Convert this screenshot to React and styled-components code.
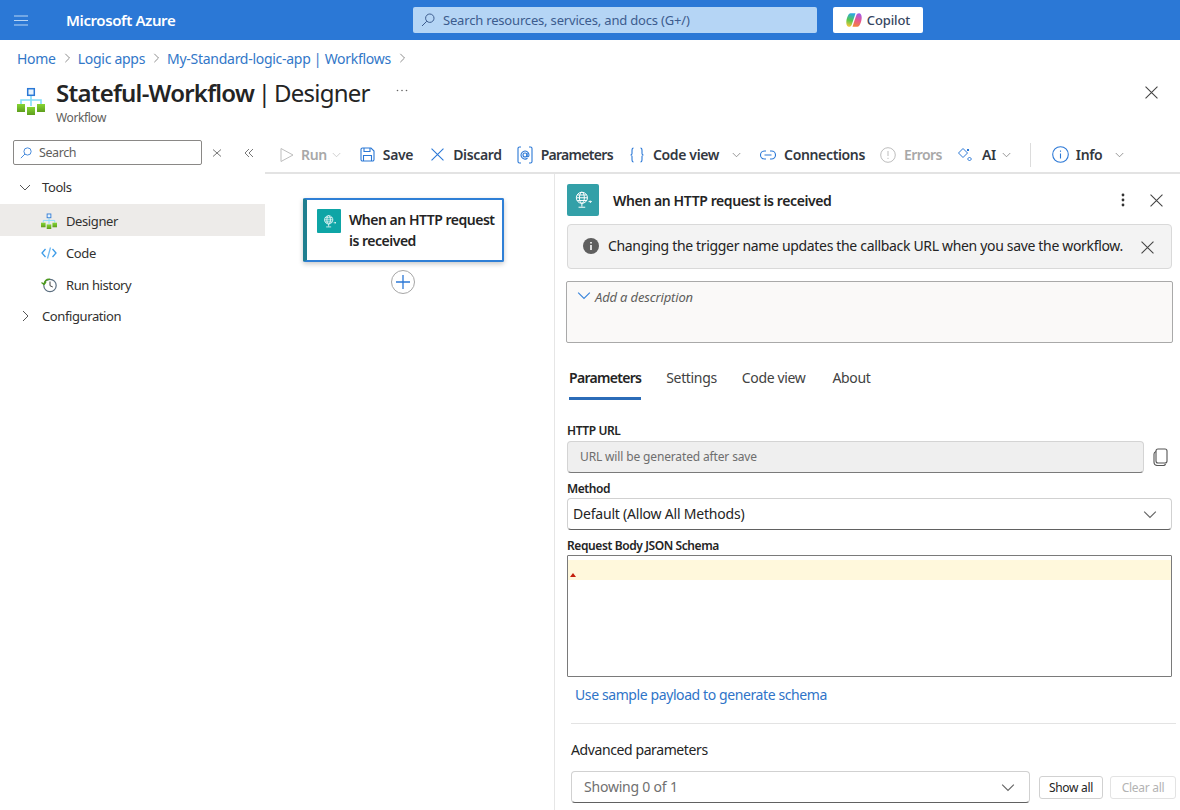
import React from "react";
import styled, { createGlobalStyle } from "styled-components";

const Global = createGlobalStyle`
  html, body { margin: 0; padding: 0; background: #fff; }
  body { font-family: "Noto Sans", "Open Sans", sans-serif; color: #242424; letter-spacing: -0.025em; }
  * { box-sizing: border-box; }
`;

const Page = styled.div`
  width: 1180px; height: 810px; overflow: hidden; display: flex; flex-direction: column; background: #fff;
`;
const TopBar = styled.header`
  height: 40px; flex: none; background: #2b78d6; display: flex; align-items: center; padding-left: 14px;
`;
const Brand = styled.div`
  margin-left: 38px; width: 347px; color: #fff; font-size: 15px; font-weight: 600;
`;
const GlobalSearch = styled.div`
  width: 404px; height: 26px; background: #b5d5f5; border-radius: 2px; display: flex; align-items: center;
  gap: 8px; padding-left: 8px; color: #3c5c8e; font-size: 13px; letter-spacing: -0.014em;
`;
const CopilotBtn = styled.button`
  margin-left: 16px; width: 90px; height: 26px; background: #fff; border: 0; border-radius: 2px; display: flex;
  align-items: center; justify-content: center; gap: 5px; color: #36465f; font: 500 13px "Noto Sans", sans-serif; letter-spacing: -0.01em;
`;
const Crumbs = styled.nav`
  height: 36px; flex: none; display: flex; align-items: center; padding-left: 17px; gap: 6px;
  font-size: 14px; color: #3277c8; letter-spacing: -0.02em;
`;
const TitleRow = styled.div`
  height: 59px; flex: none; display: flex; padding-left: 17px; align-items: flex-start; padding-top: 1px;
`;
const TitleLogo = styled.div`
  padding-top: 10px; display: flex;
`;
const TitleText = styled.div`
  margin-left: 11px; display: flex; flex-direction: column; width: 340px;
`;
const Title = styled.h1`
  margin: 0; font-size: 24px; line-height: 32px; font-weight: 400; color: #242424; white-space: nowrap;
  letter-spacing: -0.032em; word-spacing: -1.7px;
  b { font-weight: 600; }
`;
const Sub = styled.div`
  font-size: 12px; line-height: 16px; color: #605e5c; margin-top: 1px;
`;
const TitleActions = styled.div`
  width: 762px; display: flex; justify-content: space-between; align-items: flex-start;
`;
const TitleDots = styled.div`
  display: flex; margin-top: 12px;
`;
const TitleClose = styled.div`
  display: flex; margin-top: 9px;
`;
const Body = styled.div`
  flex: 1; display: flex; min-height: 0;
`;
const Sidebar = styled.aside`
  width: 265px; flex: none; display: flex; flex-direction: column; padding-top: 5px;
`;
const SideTop = styled.div`
  display: flex; align-items: center; padding-left: 13px;
`;
const SideSearch = styled.div`
  width: 189px; height: 25px; border: 1px solid #8a8886; border-radius: 2px; display: flex; align-items: center;
  gap: 7px; padding-left: 6px; font-size: 12.5px; color: #605e5c;
`;
const SideBtn = styled.div`
  display: flex; margin-left: ${p => p.$ml}px;
`;
const GroupRow = styled.div`
  height: ${p => p.$h || 32}px; display: flex; align-items: center; gap: 11px; padding-left: 19px; font-size: 13px; color: #323130;
  margin-top: ${p => p.$mt || 0}px; padding-bottom: ${p => p.$pb || 0}px;
`;
const NavRow = styled.div`
  height: 32px; display: flex; align-items: center; gap: 9px; padding: 1px 0 0 41px; font-size: 13px; color: #323130;
  background: ${p => (p.$active ? "#edebe9" : "transparent")};
`;
const Main = styled.div`
  flex: 1; display: flex; flex-direction: column; min-width: 0;
`;
const Toolbar = styled.div`
  height: 39px; flex: none; border-bottom: 2px solid #e3e3e3; display: flex; align-items: center; padding-left: 15px;
  padding-top: 2px;
`;
const ToolItem = styled.div`
  display: flex; align-items: center; gap: ${p => p.$gap ?? 8}px; margin-left: ${p => p.$ml || 0}px; font-size: 14px; font-weight: 600;
  color: ${p => (p.$off ? "#a8a8a8" : "#33383f")}; white-space: nowrap; letter-spacing: ${p => p.$ls || "-0.025em"};
`;
const ChevWrap = styled.span`
  display: flex; margin-left: ${p => p.$w ?? -2}px;
`;
const ToolDivider = styled.div`
  width: 1px; height: 24px; background: #dcdcdc; margin-left: 19px;
`;
const Work = styled.div`
  flex: 1; display: flex; min-height: 0;
`;
const Canvas = styled.div`
  width: 290px; flex: none; border-right: 1px solid #e6e6e6; display: flex; flex-direction: column; align-items: flex-start;
  padding: 24px 0 0 38px;
`;
const Node = styled.div`
  width: 201px; height: 64px; background: #fff; border: 2px solid #2f7fd6; border-left: 4px solid #1f7f8f; border-radius: 2px;
  box-shadow: 0 2px 5px rgba(0,0,0,.22); display: flex; padding: 9px 0 0 10px; gap: 8px; font-size: 14px; font-weight: 600;
  line-height: 21px; color: #242424; letter-spacing: -0.035em;
`;
const NodeIcon = styled.div`
  width: 24px; height: 24px; background: #0ea5a6; border-radius: 1px; display: flex; align-items: center; justify-content: center; flex: none;
`;
const NodeLabel = styled.div`
  width: 150px; white-space: nowrap;
`;
const AddBtn = styled.div`
  width: 24px; height: 24px; border-radius: 50%; border: 1px solid #a6a6a6; margin: 8px 0 0 88px; background: #fff;
  display: flex; align-items: center; justify-content: center;
`;
const Panel = styled.section`
  flex: 1; min-width: 0; padding: 10px 8px 0 12px; display: flex; flex-direction: column; overflow: hidden;
`;
const PanelHead = styled.div`
  height: 32px; flex: none; display: flex; align-items: center; font-size: 14px; font-weight: 600; color: #242424;
`;
const HeadIcon = styled.div`
  width: 32px; height: 32px; background: #33a0a8; border-radius: 2px; display: flex; align-items: center; justify-content: center; margin-right: 14px; flex: none;
`;
const HeadTitle = styled.div`
  flex: 1;
`;
const HeadBtns = styled.div`
  display: flex; align-items: center; gap: 25px; margin-right: 9px;
`;
const Notice = styled.div`
  height: 45px; flex: none; margin-top: 8px; background: #f3f3f3; border: 1px solid #d9d9d9; border-radius: 4px; display: flex;
  align-items: center; padding: 0 0 2px 15px; gap: 9px; font-size: 14px; color: #242424; width: 605px; letter-spacing: -0.0235em;
`;
const NoticeText = styled.div`
  flex: 1; white-space: nowrap;
`;
const NoticeClose = styled.div`
  display: flex; margin: 4px 17px 0 0;
`;
const Description = styled.div`
  height: 62px; flex: none; width: 607px; margin: 12px 0 0 -1px; background: #faf9f8; border: 1px solid #a9a9a9; border-radius: 2px;
  display: flex; padding: 6px 0 0 10px; gap: 4px; font-size: 13px; font-style: italic; color: #605e5c; letter-spacing: -0.012em;
  svg { margin-top: 0; }
  span { line-height: 18px; }
`;
const Tabs = styled.div`
  flex: none; display: flex; margin-top: 24px; padding-left: 2px; gap: 25px;
`;
const Tab = styled.div`
  height: 33px; font-size: 14px; line-height: 22px; color: ${p => (p.$active ? "#242424" : "#424242")};
  font-weight: ${p => (p.$active ? 600 : 400)}; border-bottom: 3px solid ${p => (p.$active ? "#2b6cb8" : "transparent")};
  white-space: nowrap; letter-spacing: ${p => (p.$active ? "-0.05em" : "-0.025em")}; margin-left: ${p => p.$ml || 0}px;
`;
const Label = styled.div`
  font-size: 12px; font-weight: 600; line-height: 16px; color: #242424; margin-top: ${p => p.$mt}px; padding-bottom: ${p => p.$pb || 0}px; flex: none;
`;
const InputRow = styled.div`
  flex: none; display: flex; align-items: center; gap: 9px; margin-top: 2px;
`;
const ReadOnly = styled.div`
  width: 577px; height: 32px; background: #efefef; border: 1px solid #d4d4d4; border-bottom-color: #7a7a7a; border-radius: 4px;
  display: flex; align-items: center; padding: 0 0 1px 12px; font-size: 12px; color: #6e6e6e; letter-spacing: -0.012em;
`;
const Select = styled.div`
  width: ${p => p.$w}px; height: 32px; flex: none; background: #fff; border: 1px solid #d1d1d1; border-bottom-color: #616161; border-radius: 4px;
  display: flex; align-items: center; justify-content: space-between; padding: 0 14px 1px ${p => p.$pl}px; font-size: 14px;
  color: ${p => p.$muted ? "#707070" : "#242424"}; letter-spacing: -0.015em;
`;
const Editor = styled.div`
  width: 605px; height: 122px; flex: none; border: 1px solid #7a7a7a; border-radius: 1px; padding-top: 4px; background: #fff;
`;
const EditorLine = styled.div`
  height: 20px; background: #fff8dc; position: relative;
  &::after { content: ""; position: absolute; left: 2px; bottom: 3px; border-left: 3px solid transparent; border-right: 3px solid transparent; border-bottom: 4px solid #c41e0c; }
`;
const LinkText = styled.a`
  flex: none; margin: 8px 0 0 8px; font-size: 14px; line-height: 19px; color: #2f74c8;
`;
const Divider = styled.div`
  flex: none; height: 1px; background: #e3e3e3; margin: 19px -4px 0 4px;
`;
const AdvLabel = styled.div`
  flex: none; margin: 16px 0 0 4px; font-size: 14px; line-height: 20px; color: #242424;
`;
const AdvRow = styled.div`
  flex: none; display: flex; align-items: center; margin: 11px -4px 0 4px;
`;
const SmallBtn = styled.button`
  width: ${p => p.$w}px; height: 23px; margin-left: ${p => p.$ml}px; background: #fff; border: 1px solid ${p => p.disabled ? "#e3e3e3" : "#d1d1d1"}; border-radius: 3px;
  font: 12px "Noto Sans", sans-serif; letter-spacing: -0.025em; color: ${p => (p.disabled ? "#b3b3b3" : "#242424")}; padding: 0;
`;

const Chev = ({ s = 12, c = "#605e5c", d = "down", w = 1 }) => {
  const paths = { down: "M1 4l5 5 5-5", right: "M4 1l5 5-5 5" };
  return <svg width={s} height={s} viewBox="0 0 12 12" fill="none" stroke={c} strokeWidth={w}><path d={paths[d]} /></svg>;
};
const Cross = ({ s = 12, c = "#444", w = 1 }) => (
  <svg width={s} height={s} viewBox="0 0 12 12" stroke={c} strokeWidth={w} fill="none"><path d="M.5.5l11 11M11.5.5l-11 11" /></svg>
);
const Mag = ({ c = "#3c5c8e", s = 14 }) => (
  <svg width={s} height={s} viewBox="0 0 14 14" fill="none" stroke={c} strokeWidth="1"><circle cx="8.8" cy="5.2" r="4.2" /><path d="M5.8 8.2L1 13" /></svg>
);
const Flow = ({ s = 28, id = "grn" }) => (
  <svg width={s} height={s} viewBox="0 0 28 28" fill="none">
    <defs><linearGradient id={id} x1="0" y1="0" x2="0" y2="1"><stop offset="0" stopColor="#86d633" /><stop offset="1" stopColor="#5e9e1e" /></linearGradient></defs>
    <path d="M14 9v10M4 17v-4h20v4" stroke="#83dcf9" strokeWidth="1.6" />
    <rect x="10.7" y="1.7" width="6.6" height="6.6" fill="#e8f3fc" stroke="#2a78d6" strokeWidth="1.5" />
    <rect y="17" width="8" height="8" fill={`url(#${id})`} /><rect x="10" y="20" width="8" height="8" fill={`url(#${id})`} /><rect x="20" y="17" width="8" height="8" fill={`url(#${id})`} />
  </svg>
);
const Globe = ({ s = 18 }) => (
  <svg width={s} height={s} viewBox="0 0 18 18" fill="none" stroke="#fff" strokeWidth=".9">
    <circle cx="8" cy="7" r="5" /><ellipse cx="8" cy="7" rx="2.2" ry="5" /><path d="M3 7h10M3.8 4.5h8.4M3.8 9.5h8.4M8 12v3M5 15.5h6" />
    <path d="M14 10.5h2.5M15.5 9.5l1 1-1 1" />
  </svg>
);
const Copilot = () => (
  <svg width="16" height="16" viewBox="0 0 16 16">
    <defs>
      <linearGradient id="cp1" x1="0.6" y1="0" x2="0.4" y2="1"><stop offset="0" stopColor="#2aa7e8" /><stop offset=".55" stopColor="#58c84b" /><stop offset="1" stopColor="#f4c63a" /></linearGradient>
      <linearGradient id="cp2" x1="0.6" y1="0" x2="0.4" y2="1"><stop offset="0" stopColor="#a35be8" /><stop offset=".5" stopColor="#e8578f" /><stop offset="1" stopColor="#f2843c" /></linearGradient>
    </defs>
    <path d="M4.500 1.200h5L8 6 5.800 12.500C5.300 14 4.300 14.800 3 14.800 1.300 14.800 .3 13 .3 10.500 .3 7 2 3 3 2 3.400 1.500 4 1.200 4.500 1.200z" fill="url(#cp1)" />
    <path d="M11.500 14.800h-5L8 10 10.200 3.500C10.700 2 11.700 1.200 13 1.200 14.700 1.200 15.700 3 15.700 5.500 15.700 9 14 13 13 14 12.600 14.500 12 14.800 11.500 14.800z" fill="url(#cp2)" />
  </svg>
);

export default function App() {
  return (
    <Page>
      <Global />
      <TopBar>
        <svg width="14" height="11" viewBox="0 0 14 11" stroke="#b9d5f3" strokeWidth="1.2"><path d="M0 1h14M0 5.500h14M0 10h14" /></svg>
        <Brand>Microsoft Azure</Brand>
        <GlobalSearch><Mag />Search resources, services, and docs (G+/)</GlobalSearch>
        <CopilotBtn><Copilot />Copilot</CopilotBtn>
      </TopBar>
      <Crumbs>
        <span>Home</span><Chev s={10} c="#777" d="right" />
        <span>Logic apps</span><Chev s={10} c="#777" d="right" />
        <span>My-Standard-logic-app | Workflows</span><Chev s={10} c="#777" d="right" />
      </Crumbs>
      <TitleRow>
        <TitleLogo><Flow /></TitleLogo>
        <TitleText>
          <Title><b>Stateful-Workflow</b> | Designer</Title>
          <Sub>Workflow</Sub>
        </TitleText>
        <TitleActions>
          <TitleDots>
            <svg width="12" height="3" viewBox="0 0 12 3" fill="#666"><circle cx="1.500" cy="1.500" r=".8" /><circle cx="6" cy="1.500" r=".8" /><circle cx="10.500" cy="1.500" r=".8" /></svg>
          </TitleDots>
          <TitleClose><Cross s={13} /></TitleClose>
        </TitleActions>
      </TitleRow>
      <Body>
        <Sidebar>
          <SideTop>
            <SideSearch><Mag c="#2b78d6" s={12} />Search</SideSearch>
            <SideBtn $ml={10}><svg width="10" height="10" viewBox="0 0 10 10" stroke="#777" fill="none"><path d="M1 1.500l8 7M9 1.500l-8 7" /></svg></SideBtn>
            <SideBtn $ml={22}><svg width="10" height="10" viewBox="0 0 10 10" stroke="#777" fill="none"><path d="M5 1L1 5l4 4M9 1L5 5l4 4" /></svg></SideBtn>
          </SideTop>
          <GroupRow $mt={6} $h={33} $pb={1}><Chev c="#555" />Tools</GroupRow>
          <NavRow $active><Flow s={16} id="grn2" />Designer</NavRow>
          <NavRow>
            <svg width="16" height="16" viewBox="0 0 16 16" fill="none" strokeWidth="1.300"><path d="M4.500 4L1 8l3.500 4" stroke="#3b9be8" /><path d="M11.500 4L15 8l-3.500 4" stroke="#3b9be8" /><path d="M9.500 2.500l-3 11" stroke="#70b8f0" /></svg>
            Code
          </NavRow>
          <NavRow>
            <svg width="16" height="16" viewBox="0 0 16 16" fill="none"><circle cx="9" cy="8.500" r="6.200" stroke="#5c6f80" strokeWidth="1.200" /><path d="M9 4.500v4.200l2.800 1.300" stroke="#444" /><path d="M3 7.500L.5 5.500M3 7.500L5 5M3 7.500C3.500 4 6 2 9 2.300" stroke="#4e9a1f" strokeWidth="1.300" /></svg>
            Run history
          </NavRow>
          <GroupRow><Chev c="#555" d="right" />Configuration</GroupRow>
        </Sidebar>
        <Main>
          <Toolbar>
            <ToolItem $off $gap={7}>
              <svg width="14" height="16" viewBox="0 0 14 16" fill="none" stroke="#bdbdbd"><path d="M1 1.500v13l12-6.500z" /></svg>
              Run<ChevWrap><Chev s={9} c="#c0c0c0" /></ChevWrap>
            </ToolItem>
            <ToolItem $ml={19} $gap={8}>
              <svg width="15" height="15" viewBox="0 0 15 15" fill="none" stroke="#2b78d6" strokeWidth="1.100"><path d="M1 2.500A1.500 1.500 0 0 1 2.500 1h8.500L14 4v8.500a1.500 1.500 0 0 1-1.500 1.500h-10A1.500 1.500 0 0 1 1 12.500z" /><path d="M4 1v3.500h6V1M3.500 14V8.500h8V14" /></svg>
              Save
            </ToolItem>
            <ToolItem $ml={18} $gap={9}><Cross s={13} c="#2b78d6" />Discard</ToolItem>
            <ToolItem $ml={15} $gap={8} $ls="-0.05em">
              <svg width="16" height="18" viewBox="0 0 16 18" fill="none" stroke="#2b78d6" strokeWidth="1.100"><path d="M4 1H2.500A1.500 1.500 0 0 0 1 2.500v13A1.500 1.500 0 0 0 2.500 17H4M12 1h1.500A1.500 1.500 0 0 1 15 2.500v13a1.500 1.500 0 0 1-1.500 1.500H12" /><circle cx="8" cy="9" r="2" /><path d="M10 7v3c0 1.200 2 1 2-1a4 4 0 1 0-1.500 3.200" /></svg>
              Parameters
            </ToolItem>
            <ToolItem $ml={17} $gap={9}>
              <svg width="14" height="16" viewBox="0 0 14 16" fill="none" stroke="#2b78d6" strokeWidth="1.100"><path d="M3.500 1C2 1 2 2 2 3.500v3C2 7.500 1.500 8 .5 8c1 0 1.500.5 1.500 1.500v3C2 14 2 15 3.500 15M10.500 1C12 1 12 2 12 3.500v3c0 1 .5 1.500 1.500 1.500-1 0-1.500.5-1.500 1.500v3c0 1.500 0 2.500-1.500 2.500" /></svg>
              Code view<ChevWrap $w={4}><Chev s={9} c="#777" /></ChevWrap>
            </ToolItem>
            <ToolItem $ml={19} $gap={8}>
              <svg width="16" height="10" viewBox="0 0 16 10" fill="none" stroke="#2b78d6" strokeWidth="1.100"><path d="M6 1H4.500a4 4 0 0 0 0 8H6M10 1h1.500a4 4 0 0 1 0 8H10M4.500 5h7" /></svg>
              Connections
            </ToolItem>
            <ToolItem $off $ml={15} $gap={8} $ls="-0.04em">
              <svg width="16" height="16" viewBox="0 0 16 16" fill="none" stroke="#bdbdbd"><circle cx="8" cy="8" r="7.300" /><path d="M8 4v5M8 10.800v1.200" /></svg>
              Errors
            </ToolItem>
            <ToolItem $ml={15} $gap={9}>
              <svg width="16" height="16" viewBox="0 0 16 16" fill="none" stroke="#2b78d6"><path d="M6 1.500L10.500 6 6 10.500 1.500 6z" /><path d="M12.500 10l2 2-2 2-2-2z" /><path d="M11 2l1 1-1 1-1-1z" /></svg>
              AI<ChevWrap $w={-3}><Chev s={9} c="#777" /></ChevWrap>
            </ToolItem>
            <ToolDivider />
            <ToolItem $ml={21} $gap={7}>
              <svg width="17" height="17" viewBox="0 0 17 17" fill="none" stroke="#2b78d6" strokeWidth="1.100"><circle cx="8.500" cy="8.500" r="7.800" /><path d="M8.500 7.500v5M8.500 4.500v1.300" /></svg>
              Info<ChevWrap $w={6}><Chev s={9} c="#777" /></ChevWrap>
            </ToolItem>
          </Toolbar>
          <Work>
            <Canvas>
              <Node>
                <NodeIcon><Globe s={15} /></NodeIcon>
                <NodeLabel>When an HTTP request<br />is received</NodeLabel>
              </Node>
              <AddBtn>
                <svg width="14" height="14" viewBox="0 0 14 14" stroke="#2b78d6" strokeWidth="1.300"><path d="M7 0v14M0 7h14" /></svg>
              </AddBtn>
            </Canvas>
            <Panel>
              <PanelHead>
                <HeadIcon><Globe s={20} /></HeadIcon>
                <HeadTitle>When an HTTP request is received</HeadTitle>
                <HeadBtns>
                  <svg width="4" height="14" viewBox="0 0 4 14" fill="#333"><circle cx="2" cy="2" r="1.400" /><circle cx="2" cy="7" r="1.400" /><circle cx="2" cy="12" r="1.400" /></svg>
                  <Cross s={13} />
                </HeadBtns>
              </PanelHead>
              <Notice>
                <svg width="16" height="16" viewBox="0 0 16 16"><circle cx="8" cy="8" r="8" fill="#5f5f5f" /><path d="M8 7v5M8 4v1.600" stroke="#fff" strokeWidth="1.600" /></svg>
                <NoticeText>Changing the trigger name updates the callback URL when you save the workflow.</NoticeText>
                <NoticeClose><Cross s={13} /></NoticeClose>
              </Notice>
              <Description>
                <Chev s={14} c="#3a86dc" /><span>Add a description</span>
              </Description>
              <Tabs>
                <Tab $active>Parameters</Tab>
                <Tab>Settings</Tab>
                <Tab>Code view</Tab>
                <Tab $ml={2}>About</Tab>
              </Tabs>
              <Label $mt={23}>HTTP URL</Label>
              <InputRow>
                <ReadOnly>URL will be generated after save</ReadOnly>
                <svg width="15" height="18" viewBox="0 0 15 18" fill="none" stroke="#555" strokeWidth="1.100"><rect x="3" y="1" width="11" height="14" rx="2" /><path d="M3 3.500C1.500 4 1 5 1 6v8c0 2 1.500 3.500 3.500 3.500h6c1 0 1.700-.5 2-1.500" /></svg>
              </InputRow>
              <Label $mt={8} $pb={1}>Method</Label>
              <Select $w={605} $pl={5}>Default (Allow All Methods)<Chev s={14} c="#666" /></Select>
              <Label $mt={8} $pb={1}>Request Body JSON Schema</Label>
              <Editor><EditorLine /></Editor>
              <LinkText>Use sample payload to generate schema</LinkText>
              <Divider />
              <AdvLabel>Advanced parameters</AdvLabel>
              <AdvRow>
                <Select $w={459} $pl={12} $muted>Showing 0 of 1<Chev s={14} c="#666" /></Select>
                <SmallBtn $w={64} $ml={9}>Show all</SmallBtn>
                <SmallBtn $w={66} $ml={7} disabled>Clear all</SmallBtn>
              </AdvRow>
            </Panel>
          </Work>
        </Main>
      </Body>
    </Page>
  );
}
